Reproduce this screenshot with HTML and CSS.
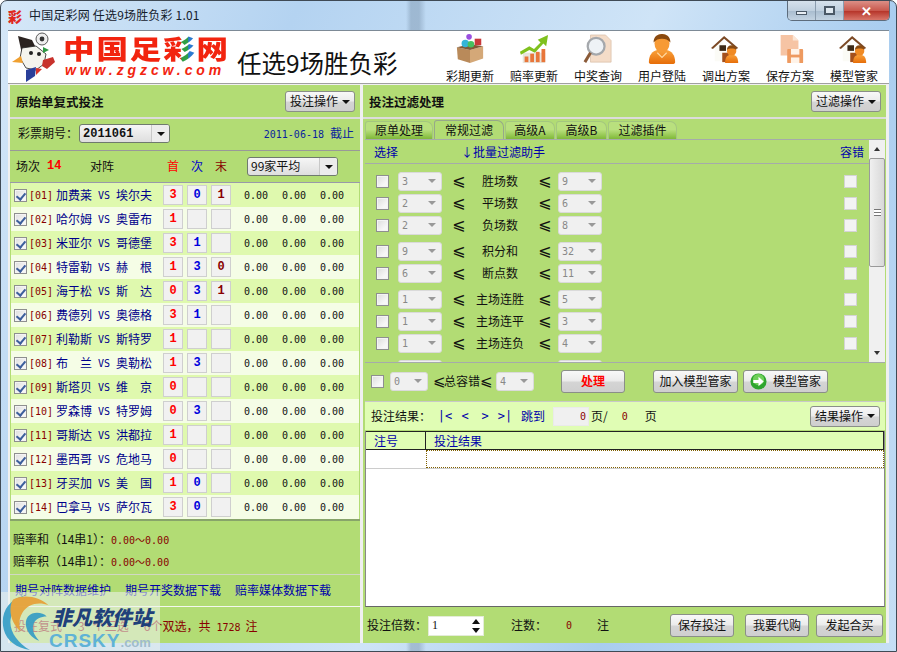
FILE: index.html
```html
<!DOCTYPE html>
<html lang="zh-CN">
<head>
<meta charset="utf-8">
<title>中国足彩网 任选9场胜负彩 1.01</title>
<link rel="stylesheet" href="styles.css">
</head>
<body>
<svg class="defs" aria-hidden="true">
  <defs>
    <linearGradient id="skin" x1="0" y1="0" x2="0" y2="1"><stop offset="0" stop-color="#f9a23c"/><stop offset="1" stop-color="#e66d08"/></linearGradient>
    <symbol id="person" viewBox="0 0 32 32">
      <path d="M2 30c0-8 4-12 9-13h10c5 1 9 5 9 13 0 1-1 2-3 2H5c-2 0-3-1-3-2z" fill="url(#skin)"/>
      <ellipse cx="16" cy="10" rx="8" ry="10" fill="#f79a34"/>
      <path d="M7 9c0-6 4-9 9-9s9 3 9 9c-3-3-5-4-9-4s-6 1-9 4z" fill="#8a4a10"/>
      <path d="M11 20l5 5 5-5" fill="none" stroke="#ffd9a0" stroke-width="1.2"/>
    </symbol>
    <symbol id="house" viewBox="0 0 32 32">
      <path d="M4 14v15h14V14L11 8z" fill="#fbfbf6"/>
      <path d="M0 15L14 2l15 13-2 1L14 5 2 16z" fill="#7c4a26"/>
      <rect x="9" y="12" width="7" height="6" fill="#3d2a18"/>
      <rect x="12" y="20" width="8" height="10" fill="#a4501c"/>
      <path d="M15 31c0-6 2-8 5-9h4c3 1 5 3 5 9z" fill="url(#skin)"/>
      <circle cx="22" cy="18" r="5" fill="#f08a24"/>
      <path d="M17 17c0-3 2-5 5-5s5 2 5 5c-2-2-8-2-10 0z" fill="#8a4a10"/>
    </symbol>
  </defs>
</svg>

<div class="window">
  <div class="titlebar">
    <span class="appicon">彩</span>
    <span class="apptitle">中国足彩网 任选9场胜负彩 1.01</span>
    <div class="winctl">
      <span class="wbtn wmin"><i></i></span>
      <span class="wbtn wmax"><i></i></span>
      <span class="wbtn wclose">✕</span>
    </div>
  </div>

  <div class="client">
    <header class="header">
      <svg class="mascot" viewBox="0 0 48 50">
        <path d="M8 4l14 4 6 12-6 8-10-6z" fill="#2b2320"/>
        <path d="M12 16l14-2 10 8-2 10-8 6-10-2-6-10z" fill="#f4f4ee" stroke="#222" stroke-width=".8"/>
        <circle cx="21" cy="21" r="2" fill="#222"/><circle cx="29" cy="22" r="2" fill="#222"/>
        <path d="M2 30l9-6 2 7z" fill="#f0a030"/>
        <path d="M16 38l10-3-1 9-9 6z" fill="#2a3f9a"/><path d="M26 36l6 1-6 6z" fill="#d8332a"/>
        <path d="M33 28l10-3 2 5-8 7-5-3z" fill="#c8322c"/>
        <path d="M33 15l6 3-6 3z" fill="#2e9a44"/>
        <circle cx="32" cy="7" r="6" fill="#eee" stroke="#333" stroke-width=".8"/><circle cx="32" cy="7" r="2.4" fill="#333"/>
      </svg>
      <div class="logo">
        <div class="logo-cn">中国足<span class="logo-cai">彩</span>网</div>
        <div class="logo-url">www.zgzcw.com</div>
      </div>
      <div class="product">任选9场胜负彩</div>
      <nav class="tools">
        <div class="tool">
          <svg class="ico" viewBox="0 0 32 32"><path d="M2 14l14 3v14L3 27z" fill="#b98a5a"/><path d="M16 17l14-4v13l-14 5z" fill="#d4a878"/><path d="M2 14l14-3 14 2-14 4z" fill="#7f5a38"/><circle cx="11" cy="10" r="4" fill="#35b5d8"/><circle cx="17" cy="11" r="3.5" fill="#45c060"/><rect x="21" y="5" width="7" height="7" fill="#c8383a"/><circle cx="15" cy="3" r="3" fill="#9a50e0"/></svg>
          <span>彩期更新</span>
        </div>
        <div class="tool">
          <svg class="ico" viewBox="0 0 32 32"><rect x="4" y="20" width="24" height="11" fill="#e8e4dc"/><rect x="6" y="24" width="4" height="6" fill="#e8763a"/><rect x="12" y="21" width="4" height="9" fill="#e8763a"/><rect x="18" y="19" width="4" height="11" fill="#e8763a"/><rect x="24" y="16" width="4" height="14" fill="#e8763a"/><path d="M1 19l10-6 5 3 7-7-3-3 11-5-2 12-3-3-9 10-6-3-9 5z" fill="#7fc11e"/></svg>
          <span>赔率更新</span>
        </div>
        <div class="tool">
          <svg class="ico" viewBox="0 0 32 32"><path d="M8 1h16l6 6v23H8z" fill="#f4dcc8" stroke="#d0b49c" stroke-width=".6"/><circle cx="14" cy="13" r="9" fill="#eef2f6" stroke="#a5a8ac" stroke-width="2.4"/><path d="M8 20L2 30" stroke="#8a5a38" stroke-width="3.2"/></svg>
          <span>中奖查询</span>
        </div>
        <div class="tool">
          <svg class="ico"><use href="#person"/></svg>
          <span>用户登陆</span>
        </div>
        <div class="tool">
          <svg class="ico"><use href="#house"/></svg>
          <span>调出方案</span>
        </div>
        <div class="tool">
          <svg class="ico" viewBox="0 0 32 32"><path d="M6 1h13l6 6v16H6z" fill="#f6c4a4"/><path d="M19 1v6h6z" fill="#fbe6d6"/><rect x="13" y="16" width="17" height="15" rx="1" fill="#ee9a60"/><rect x="17" y="16" width="9" height="6" fill="#fff3e8"/><rect x="17" y="25" width="9" height="6" fill="#fff3e8"/></svg>
          <span>保存方案</span>
        </div>
        <div class="tool">
          <svg class="ico"><use href="#house"/></svg>
          <span>模型管家</span>
        </div>
      </nav>
    </header>

    <div class="panels">
      <section class="panel left">
        <div class="ptitle"><b>原始单复式投注</b><button class="btn menu">投注操作<i class="caret"></i></button></div>
        <div class="period">
          <span class="plabel">彩票期号：</span>
          <span class="combo period-combo"><b>2011061</b><i class="drop"><i class="caret"></i></i></span>
          <span class="deadline"><span class="mono date">2011-06-18</span>截止</span>
        </div>
        <div class="thead">
          <span class="th-num">场次</span><b class="th-count">14</b>
          <span class="th-vs">对阵</span>
          <span class="th-a">首</span><span class="th-b">次</span><span class="th-c">末</span>
          <span class="combo avg-combo"><span>99家平均</span><i class="drop"><i class="caret"></i></i></span>
        </div>
        <div class="rows">
          <div class="row"><i class="cb on"></i><span class="idx">[01]</span><span class="team">加费莱</span><span class="vs">VS</span><span class="team">埃尔夫</span><span class="picks"><b class="a">3</b><b class="b">0</b><b class="c">1</b></span><span class="odd">0.00</span><span class="odd">0.00</span><span class="odd">0.00</span></div>
          <div class="row"><i class="cb on"></i><span class="idx">[02]</span><span class="team">哈尔姆</span><span class="vs">VS</span><span class="team">奥雷布</span><span class="picks"><b class="a">1</b><b></b><b></b></span><span class="odd">0.00</span><span class="odd">0.00</span><span class="odd">0.00</span></div>
          <div class="row"><i class="cb on"></i><span class="idx">[03]</span><span class="team">米亚尔</span><span class="vs">VS</span><span class="team">哥德堡</span><span class="picks"><b class="a">3</b><b class="b">1</b><b></b></span><span class="odd">0.00</span><span class="odd">0.00</span><span class="odd">0.00</span></div>
          <div class="row"><i class="cb on"></i><span class="idx">[04]</span><span class="team">特雷勒</span><span class="vs">VS</span><span class="team split"><span>赫</span><span>根</span></span><span class="picks"><b class="a">1</b><b class="b">3</b><b class="c">0</b></span><span class="odd">0.00</span><span class="odd">0.00</span><span class="odd">0.00</span></div>
          <div class="row"><i class="cb on"></i><span class="idx">[05]</span><span class="team">海于松</span><span class="vs">VS</span><span class="team split"><span>斯</span><span>达</span></span><span class="picks"><b class="a">0</b><b class="b">3</b><b class="c">1</b></span><span class="odd">0.00</span><span class="odd">0.00</span><span class="odd">0.00</span></div>
          <div class="row"><i class="cb on"></i><span class="idx">[06]</span><span class="team">费德列</span><span class="vs">VS</span><span class="team">奥德格</span><span class="picks"><b class="a">3</b><b class="b">1</b><b></b></span><span class="odd">0.00</span><span class="odd">0.00</span><span class="odd">0.00</span></div>
          <div class="row"><i class="cb on"></i><span class="idx">[07]</span><span class="team">利勒斯</span><span class="vs">VS</span><span class="team">斯特罗</span><span class="picks"><b class="a">1</b><b></b><b></b></span><span class="odd">0.00</span><span class="odd">0.00</span><span class="odd">0.00</span></div>
          <div class="row"><i class="cb on"></i><span class="idx">[08]</span><span class="team split"><span>布</span><span>兰</span></span><span class="vs">VS</span><span class="team">奥勒松</span><span class="picks"><b class="a">1</b><b class="b">3</b><b></b></span><span class="odd">0.00</span><span class="odd">0.00</span><span class="odd">0.00</span></div>
          <div class="row"><i class="cb on"></i><span class="idx">[09]</span><span class="team">斯塔贝</span><span class="vs">VS</span><span class="team split"><span>维</span><span>京</span></span><span class="picks"><b class="a">0</b><b></b><b></b></span><span class="odd">0.00</span><span class="odd">0.00</span><span class="odd">0.00</span></div>
          <div class="row"><i class="cb on"></i><span class="idx">[10]</span><span class="team">罗森博</span><span class="vs">VS</span><span class="team">特罗姆</span><span class="picks"><b class="a">0</b><b class="b">3</b><b></b></span><span class="odd">0.00</span><span class="odd">0.00</span><span class="odd">0.00</span></div>
          <div class="row"><i class="cb on"></i><span class="idx">[11]</span><span class="team">哥斯达</span><span class="vs">VS</span><span class="team">洪都拉</span><span class="picks"><b class="a">1</b><b></b><b></b></span><span class="odd">0.00</span><span class="odd">0.00</span><span class="odd">0.00</span></div>
          <div class="row"><i class="cb on"></i><span class="idx">[12]</span><span class="team">墨西哥</span><span class="vs">VS</span><span class="team">危地马</span><span class="picks"><b class="a">0</b><b></b><b></b></span><span class="odd">0.00</span><span class="odd">0.00</span><span class="odd">0.00</span></div>
          <div class="row"><i class="cb on"></i><span class="idx">[13]</span><span class="team">牙买加</span><span class="vs">VS</span><span class="team split"><span>美</span><span>国</span></span><span class="picks"><b class="a">1</b><b class="b">0</b><b></b></span><span class="odd">0.00</span><span class="odd">0.00</span><span class="odd">0.00</span></div>
          <div class="row"><i class="cb on"></i><span class="idx">[14]</span><span class="team">巴拿马</span><span class="vs">VS</span><span class="team">萨尔瓦</span><span class="picks"><b class="a">3</b><b class="b">0</b><b></b></span><span class="odd">0.00</span><span class="odd">0.00</span><span class="odd">0.00</span></div>
        </div>
        <div class="summary">
          <div>赔率和（14串1）：<span class="range">0.00～0.00</span></div>
          <div>赔率积（14串1）：<span class="range">0.00～0.00</span></div>
        </div>
        <div class="links"><a>期号对阵数据维护</a><a>期号开奖数据下载</a><a>赔率媒体数据下载</a></div>
        <div class="total">投注复式<em class="n3">3</em>个三选<em class="n2">6</em>个双选，共<span class="mono tcount">1728</span>注</div>
      </section>

      <section class="panel right">
        <div class="ptitle"><b>投注过滤处理</b><button class="btn menu">过滤操作<i class="caret"></i></button></div>
        <div class="tabs">
          <span class="tab t1">原单处理</span>
          <span class="tab t2 active">常规过滤</span>
          <span class="tab t3">高级A</span>
          <span class="tab t4">高级B</span>
          <span class="tab t5">过滤插件</span>
        </div>
        <div class="filter">
          <div class="fmain">
            <div class="fhead"><span class="fh-sel">选择</span><span class="fh-batch">↓批量过滤助手</span><span class="fh-err">容错</span></div>
            <div class="flist">
              <div class="frow"><i class="cb"></i><span class="dis"><span>3</span><i></i></span><span class="le">⩽</span><span class="flabel">胜场数</span><span class="le">⩽</span><span class="dis"><span>9</span><i></i></span><i class="cbw"></i></div>
              <div class="frow"><i class="cb"></i><span class="dis"><span>2</span><i></i></span><span class="le">⩽</span><span class="flabel">平场数</span><span class="le">⩽</span><span class="dis"><span>6</span><i></i></span><i class="cbw"></i></div>
              <div class="frow"><i class="cb"></i><span class="dis"><span>2</span><i></i></span><span class="le">⩽</span><span class="flabel">负场数</span><span class="le">⩽</span><span class="dis"><span>8</span><i></i></span><i class="cbw"></i></div>
              <div class="frow gap"><i class="cb"></i><span class="dis"><span>9</span><i></i></span><span class="le">⩽</span><span class="flabel">积分和</span><span class="le">⩽</span><span class="dis"><span>32</span><i></i></span><i class="cbw"></i></div>
              <div class="frow"><i class="cb"></i><span class="dis"><span>6</span><i></i></span><span class="le">⩽</span><span class="flabel">断点数</span><span class="le">⩽</span><span class="dis"><span>11</span><i></i></span><i class="cbw"></i></div>
              <div class="frow gap"><i class="cb"></i><span class="dis"><span>1</span><i></i></span><span class="le">⩽</span><span class="flabel">主场连胜</span><span class="le">⩽</span><span class="dis"><span>5</span><i></i></span><i class="cbw"></i></div>
              <div class="frow"><i class="cb"></i><span class="dis"><span>1</span><i></i></span><span class="le">⩽</span><span class="flabel">主场连平</span><span class="le">⩽</span><span class="dis"><span>3</span><i></i></span><i class="cbw"></i></div>
              <div class="frow"><i class="cb"></i><span class="dis"><span>1</span><i></i></span><span class="le">⩽</span><span class="flabel">主场连负</span><span class="le">⩽</span><span class="dis"><span>4</span><i></i></span><i class="cbw"></i></div>
              <div class="frow gap"><i class="cb ghost"></i><span class="dis"><span></span></span><span class="le"></span><span class="flabel"></span><span class="le"></span><span class="dis"><span></span></span></div>
            </div>
          </div>
          <div class="scroll">
            <span class="sarrow up"></span>
            <span class="thumb"><i></i></span>
            <span class="strack"></span>
            <span class="sarrow down"></span>
          </div>
        </div>
        <div class="actions">
          <i class="cb"></i>
          <span class="dis short"><span>0</span><i></i></span>
          <span class="totalerr"><span class="le-in">⩽</span>总容错<span class="le-in">⩽</span></span>
          <span class="dis short"><span>4</span><i></i></span>
          <button class="btn go">处理</button>
          <button class="btn addm">加入模型管家</button>
          <button class="btn modelm"><svg class="goico" viewBox="0 0 18 18"><circle cx="9" cy="9" r="8.5" fill="#2fa52f"/><circle cx="9" cy="7" r="6" fill="#6fd05a"/><path d="M3.5 7.5H9V4l5.5 5L9 14v-3.5H3.5z" fill="#fff"/></svg>模型管家</button>
        </div>
        <div class="resbar">
          <span class="rlabel">投注结果：</span>
          <span class="nav">|&lt;</span><span class="nav">&lt;</span><span class="nav">&gt;</span><span class="nav">&gt;|</span>
          <span class="jump">跳到</span>
          <span class="pageinput">0</span>
          <span>页/</span>
          <span class="pagecount">0</span>
          <span>页</span>
          <button class="btn menu resmenu">结果操作<i class="caret"></i></button>
        </div>
        <div class="grid">
          <div class="ghead"><span class="gc1">注号</span><span class="gc2">投注结果</span></div>
          <div class="grow"><span class="gc1"></span><span class="gc2 focus"></span></div>
        </div>
        <div class="bottom">
          <span class="mlabel">投注倍数：</span>
          <span class="spin"><span>1</span><i class="updown"></i></span>
          <span class="nlabel">注数：</span>
          <span class="ncount">0</span>
          <span class="nunit">注</span>
          <button class="btn b-save">保存投注</button>
          <button class="btn b-proxy">我要代购</button>
          <button class="btn b-join">发起合买</button>
        </div>
      </section>
    </div>
  </div>

  <aside class="watermark">
    <svg class="wm-logo" viewBox="0 0 60 60">
      <path d="M26 2C8 6 0 22 4 38c3 12 14 20 28 22C18 52 8 38 12 24 14 14 20 6 26 2z" fill="#3aa0c8"/>
      <path d="M14 6c10-6 28-4 38 6-10-4-22-2-28 8-4 7-4 12-2 20C12 32 8 16 14 6z" fill="#e6a23a"/>
      <path d="M30 24c6-6 16-4 20 0-6 0-12 2-14 8-2 6 0 12 6 18-12-4-18-18-12-26z" fill="#3a9fc4"/>
    </svg>
    <div class="wm-text"><b>非凡软件站</b><span><b>CRSKY</b>.com</span></div>
  </aside>
</div>
</body>
</html>
```
FILE: styles.css
```css
* { box-sizing: border-box; }
html, body { margin: 0; padding: 0; }
body {
  width: 897px;
  height: 652px;
  overflow: hidden;
  font: 12px/1.2 "Noto Sans CJK SC", "Liberation Sans", sans-serif;
  color: #111;
  background: #fff;
}
i, em { font-style: normal; }
.defs { position: absolute; width: 0; height: 0; }
.mono { font-family: "DejaVu Sans Mono", "Liberation Mono", monospace; font-size: 10px; }

/* window frame */
.window {
  position: relative;
  width: 897px;
  height: 652px;
  display: flex;
  flex-direction: column;
  border: 1px solid #3f4a55;
  border-radius: 7px 7px 0 0;
  overflow: hidden;
  background:
    linear-gradient(90deg, transparent 405px, rgba(120,145,170,.45) 410px, rgba(120,145,170,.45) 418px, transparent 425px),
    linear-gradient(115deg, #d6e8f8 0, #b4d3f1 25%, #cfe4f7 55%, #a9cdef 75%, #c6dff5 100%);
}
.titlebar { height: 29px; flex: none; display: flex; align-items: center; padding-left: 7px; }
.appicon { width: 16px; color: #e0281e; font-weight: 900; font-size: 14px; line-height: 16px; }
.apptitle { margin-left: 5px; font-size: 12px; letter-spacing: .18px; color: #15202c; }
.winctl { margin-left: auto; margin-right: 6px; align-self: flex-start; display: flex; height: 20px; border: 1px solid #5d6c7c; border-top: 0; border-radius: 0 0 5px 5px; overflow: hidden; }
.wbtn { display: flex; align-items: center; justify-content: center; height: 100%; }
.wmin, .wmax { width: 28px; background: linear-gradient(#d5e1ec, #c0d0df 50%, #a8bccf 52%, #c3d3e2); border-right: 1px solid #8a9cae; }
.wmin i { width: 11px; height: 4px; margin-top: 5px; background: #e8eef4; border: 1px solid #4a5866; }
.wmax i { width: 11px; height: 9px; border: 2px solid #4a5866; background: #dfe8f0; }
.wclose { width: 45px; color: #fff; font-weight: 700; font-size: 13px; background: linear-gradient(#dc8f86, #c9594e 50%, #b53328 52%, #d8766a); }

.client { flex: none; width: 881px; height: 613px; margin-left: 7px; display: flex; flex-direction: column; background: #f0f0f0; border-top: 1px solid #7d8a96; }

/* header */
.header { height: 53px; flex: none; display: flex; align-items: stretch; background: #fff; border-bottom: 1px solid #a0a0a0; }
.mascot { width: 48px; height: 50px; margin: 1px 0 0 2px; flex: none; }
.logo { width: 172px; margin-left: 5px; flex: none; }
.logo-cn { height: 33px; padding-top: 3px; font-size: 26px; line-height: 28px; font-weight: 900; letter-spacing: 1.6px; color: #f2240f; white-space: nowrap; transform: scaleX(1.21); transform-origin: left; }
.logo-cai {
  background: linear-gradient(90deg, #f2240f 56%, #2f9f45 56%, #2f9f45 75%, #2b7ad0 75%);
  -webkit-background-clip: text;
  background-clip: text;
  color: transparent;
}
.logo-url { font: italic 700 14px/14px "Liberation Sans", sans-serif; letter-spacing: 3.9px; margin-top: -1px; margin-left: 2px; color: #f2240f; white-space: nowrap; }
.product { margin-left: 2px; padding-top: 16px; font-size: 24.5px; line-height: 32px; color: #111; white-space: nowrap; flex: none; }
.tools { margin-left: auto; display: flex; padding-right: 3px; }
.tool { width: 64px; display: flex; flex-direction: column; align-items: center; padding-top: 3px; font-size: 12px; color: #111; }
.tool span { margin-top: 4px; line-height: 15px; white-space: nowrap; }
.ico { width: 32px; height: 30px; display: block; }

/* panels */
.panels { flex: 1; min-height: 0; display: flex; gap: 3px; padding: 1px 3px 0 2px; }
.panel { background: #b2dc74; display: flex; flex-direction: column; }
.left { width: 350px; flex: none; }
.right { width: 523px; flex: none; }
.ptitle { height: 34px; flex: none; display: flex; align-items: center; justify-content: space-between; padding: 1px 5px 0 6px; border-bottom: 2px solid #dcdcdc; }
.ptitle b { font-size: 12.5px; }

.btn {
  font: inherit;
  color: #111;
  padding: 0;
  border: 1px solid #8a8f88;
  border-radius: 3px;
  background: linear-gradient(#f8f8f8, #ececec 45%, #d4d4d4 55%, #cfcfcf);
  display: inline-flex;
  align-items: center;
  justify-content: center;
}
.menu { width: 70px; height: 21px; }
.caret { display: inline-block; width: 0; height: 0; margin-left: 4px; border: 4px solid transparent; border-top-color: #111; border-bottom: 0; }

/* combos */
.combo { display: flex; align-items: center; height: 19px; border: 1px solid #6f7a6e; border-radius: 3px; background: linear-gradient(#f6f6f6, #dedede); overflow: hidden; }
.combo > b, .combo > span { flex: 1; padding-left: 3px; }
.drop { width: 18px; height: 100%; display: flex; align-items: center; justify-content: center; background: #ececec; border-left: 1px solid #c8c8c8; }
.drop .caret { margin: 0; }
.period { height: 31px; flex: none; display: flex; align-items: center; padding: 0 6px 2px 8px; }
.plabel { width: 61px; white-space: nowrap; }
.period-combo { width: 91px; font: 700 12px "Liberation Mono", monospace; }
.deadline { margin-left: auto; color: #0a1f9e; }
.date { margin-right: 6px; }
.thead { height: 33px; flex: none; display: flex; align-items: center; padding: 0 0 0 6px; border-top: 1px solid #999; border-bottom: 1px solid #99a; }
.th-num { width: 24px; }
.th-count { width: 28px; color: #f00; font-family: "Liberation Mono", monospace; padding-left: 7px; }
.th-vs { width: 99px; padding-left: 22px; }
.th-a { width: 24px; color: #f00; }
.th-b { width: 24px; color: #00c; }
.th-c { width: 24px; color: #800; }
.avg-combo { width: 91px; margin-left: 8px; height: 19px; }

/* match rows */
.rows { flex: none; }
.row { height: 24px; display: flex; align-items: center; padding-left: 3px; background: #dff9ae; margin: 0 1px; white-space: nowrap; }
.row:nth-child(even) { background: #f5fde6; }
.cb { position: relative; flex: none; display: block; width: 13px; height: 13px; border: 1px solid #8e8f8f; background: linear-gradient(135deg, #dcdcdc, #f7f7f7 70%); box-shadow: inset 0 0 0 1px #f4f4f4; }
.cb.on::after { content: ""; position: absolute; left: 3px; top: 1px; width: 4px; height: 7px; border: solid #3d5f9c; border-width: 0 2px 2px 0; transform: rotate(40deg); }
.cb.ghost { visibility: hidden; }
.idx { width: 27px; margin-left: 2px; color: #800; font: 10px "DejaVu Sans Mono", monospace; letter-spacing: 0; }
.team { width: 36px; color: #00008c; font-size: 12px; flex: none; }
.split { display: flex; justify-content: space-between; }
.vs { width: 24px; flex: none; text-align: center; color: #00008c; font: 10px "DejaVu Sans Mono", monospace; }
.picks { display: flex; gap: 4px; margin-left: 11px; margin-right: 13px; }
.picks b { width: 20px; height: 20px; display: flex; align-items: center; justify-content: center; border: 1px solid #cfcfcf; background: #f1f1f1; font: 700 12px "Liberation Mono", monospace; }
.picks .a { color: #f00; }
.picks .b { color: #00d; }
.picks .c { color: #800; }
.odd { width: 24px; margin-right: 14px; font: 10px "DejaVu Sans Mono", monospace; color: #111; flex: none; }

.summary { height: 55px; flex: none; padding: 7px 0 0 3px; border-top: 2px solid #88a46a; }
.summary div { height: 22px; line-height: 22px; white-space: nowrap; }
.range { color: #800; font: 10px "DejaVu Sans Mono", monospace; }
.links { height: 33px; flex: none; display: flex; align-items: center; gap: 14px; padding-left: 5px; border-top: 1px solid #d0d8c4; border-bottom: 1px solid #f4f8ee; }
.links a { color: #0000aa; }
.total { flex: 1; padding: 12px 0 0 4px; color: #800; white-space: nowrap; }
.n3 { margin: 0 8px 0 16px; }
.n2 { margin: 0 0 0 15px; }
.tcount { margin: 0 5px 0 6px; }

/* tabs */
.tabs { height: 20px; flex: none; display: flex; align-items: flex-end; padding-left: 2px; gap: 1px; }
.tab { height: 18px; display: flex; align-items: center; justify-content: center; border-radius: 3px 7px 0 0; background: linear-gradient(#b9e07e 45%, #7fb938); border: 1px solid #a4c77f; border-bottom: 0; color: #111; }
.tab.active { height: 19px; background: #b2dc74; border-color: #97a88a; }
.t1 { width: 68px; } .t2 { width: 70px; } .t3 { width: 50px; } .t4 { width: 51px; } .t5 { width: 69px; }

/* filter list */
.filter { height: 224px; flex: none; display: flex; margin: 0 1px 0 2px; border-top: 1px solid #a5abaa; border-bottom: 1px solid #a5abaa; }
.fmain { width: 504px; flex: none; display: flex; flex-direction: column; overflow: hidden; }
.fhead { height: 24px; flex: none; display: flex; align-items: center; padding-top: 2px; color: #0000aa; border-bottom: 1px solid #a5abaa; }
.fh-sel { margin-left: 9px; width: 87px; }
.fh-err { margin-left: auto; margin-right: 5px; }
.flist { flex: 1; overflow: hidden; padding-top: 6px; }
.frow { height: 22px; display: flex; align-items: center; padding-left: 11px; padding-right: 12px; }
.frow.gap { margin-top: 4px; }
.dis { display: flex; align-items: center; justify-content: space-between; width: 44px; height: 19px; padding: 0 5px 0 3px; background: #f0f0f0; border: 1px solid #dadada; border-radius: 3px; color: #888; font: 10px "DejaVu Sans Mono", monospace; flex: none; }
.dis i { width: 0; height: 0; border: 4px solid transparent; border-top-color: #999; border-bottom: 0; }
.frow .dis:first-of-type { margin-left: 9px; }
.le { width: 12px; flex: none; margin-left: 10px; font: 16px/16px "DejaVu Sans", sans-serif; text-align: center; color: #111; }
.flabel { width: 60px; margin-left: 6px; text-align: center; flex: none; white-space: nowrap; }
.flabel + .le { margin-left: 8px; }
.flabel + .le + .dis { margin-left: 8px; }
.cbw { display: block; margin-left: auto; width: 13px; height: 13px; border: 1px solid #d4d4d4; background: #f3f3f3; flex: none; }

/* scrollbar */
.scroll { width: 16px; flex: none; display: flex; flex-direction: column; background: #f0f0f0; }
.sarrow { height: 18px; flex: none; display: flex; align-items: center; justify-content: center; }
.sarrow::after { content: ""; border: 3px solid transparent; }
.up::after { border-bottom: 4px solid #333; border-top: 0; }
.down::after { border-top: 4px solid #333; border-bottom: 0; }
.thumb { height: 109px; flex: none; display: flex; align-items: center; justify-content: center; border: 1px solid #9a9a9a; border-radius: 2px; background: linear-gradient(90deg, #f0f0f0, #d8d8d8); }
.thumb i { width: 7px; height: 7px; border-top: 1px solid #777; border-bottom: 1px solid #777; background: linear-gradient(#fff 2px, #777 2px, #777 3px, #fff 3px); }
.strack { flex: 1; }

/* actions */
.actions { height: 38px; flex: none; display: flex; align-items: center; padding: 0 0 2px 8px; }
.dis.short { width: 38px; }
.actions > .cb + .dis { margin-left: 6px; }
.totalerr { width: 58px; margin: 0 5px; white-space: nowrap; font-size: 12px; display: flex; align-items: center; justify-content: space-between; }
.le-in { font: 15px/16px "DejaVu Sans", sans-serif; width: 11px; text-align: center; }
.go { width: 64px; height: 23px; margin-left: 27px; color: #f00; font-weight: 700; }
.addm { width: 85px; height: 23px; margin-left: 28px; }
.modelm { width: 85px; height: 23px; margin-left: 5px; gap: 6px; }
.goico { width: 17px; height: 17px; flex: none; }

/* result bar */
.resbar { height: 29px; flex: none; display: flex; align-items: center; margin: 0 1px 1px 2px; padding-left: 6px; background: #e0fdb4; white-space: nowrap; border-top: 1px solid #c8c8c8; }
.rlabel { width: 64px; white-space: nowrap; }
.nav { width: 20px; color: #0000aa; font-family: "DejaVu Sans Mono", monospace; font-size: 12px; text-align: center; }
.nav:nth-of-type(5) { margin-right: 6px; }
.jump { width: 32px; color: #0000aa; }
.pageinput { width: 36px; height: 19px; padding-right: 2px; text-align: right; color: #800; background: #f0f0f0; border: 1px solid #eaeaea; font: 10px/17px "DejaVu Sans Mono", monospace; margin-right: 2px; }
.pagecount { width: 37px; padding-left: 14px; color: #800; font: 10px "DejaVu Sans Mono", monospace; }
.resmenu { margin-left: auto; margin-right: 5px; }

/* results grid */
.grid { height: 176px; flex: none; margin: 0 1px 0 2px; background: #fff; border-left: 1px solid #888; border-right: 1px solid #888; border-bottom: 1px solid #666; }
.ghead { height: 19px; display: flex; background: #e0fdb4; border: solid #222; border-width: 1px 1px 1px 0; color: #0000aa; }
.grow { height: 19px; display: flex; border-bottom: 1px solid #ccc; }
.gc1 { width: 60px; padding-left: 8px; line-height: 17px; flex: none; }
.ghead .gc1 { border-right: 1px solid #222; }
.gc2 { flex: 1; padding-left: 8px; line-height: 17px; }
.focus { border: 1px dotted #806000; background: #fff; }

/* bottom bar */
.bottom { flex: 1; display: flex; align-items: center; padding: 1px 0 0 4px; white-space: nowrap; }
.mlabel { width: 61px; white-space: nowrap; }
.spin { width: 56px; height: 20px; display: flex; align-items: center; justify-content: space-between; padding: 0 3px; background: #fff; border: 1px solid #e4ecd8; font: 12px "Liberation Serif", serif; }
.updown { position: relative; width: 8px; height: 12px; }
.updown::before, .updown::after { content: ""; position: absolute; left: 0; border: 4px solid transparent; }
.updown::before { top: -1px; border-bottom: 5px solid #111; border-top: 0; }
.updown::after { bottom: -1px; border-top: 5px solid #111; border-bottom: 0; }
.nlabel { width: 40px; margin-left: 27px; white-space: nowrap; }
.ncount { width: 46px; padding-left: 15px; color: #800; font: 10px "DejaVu Sans Mono", monospace; }
.nunit { width: 16px; }
.btn.b-save { width: 64px; height: 23px; margin-left: auto; }
.btn.b-proxy { width: 64px; height: 23px; margin-left: 11px; }
.btn.b-join { width: 67px; height: 23px; margin-left: 7px; margin-right: 3px; }

/* watermark overlay */
.watermark { position: absolute; left: -1px; top: 591px; width: 160px; height: 60px; display: flex; background: rgba(236,242,236,.58); overflow: hidden; }
.wm-logo { width: 56px; height: 60px; flex: none; opacity: .95; }
.wm-text { display: flex; flex-direction: column; margin-left: -4px; padding-top: 12px; }
.wm-text > b { font-size: 20px; line-height: 26px; font-weight: 900; font-style: italic; color: #20407a; white-space: nowrap; }
.wm-text > span { margin-left: -3px; margin-top: 2px; font: 700 13px/18px "Liberation Sans", sans-serif; color: #9fbccc; white-space: nowrap; }
.wm-text > span b { font-size: 19px; color: #5fb2d6; letter-spacing: 1px; }
```
